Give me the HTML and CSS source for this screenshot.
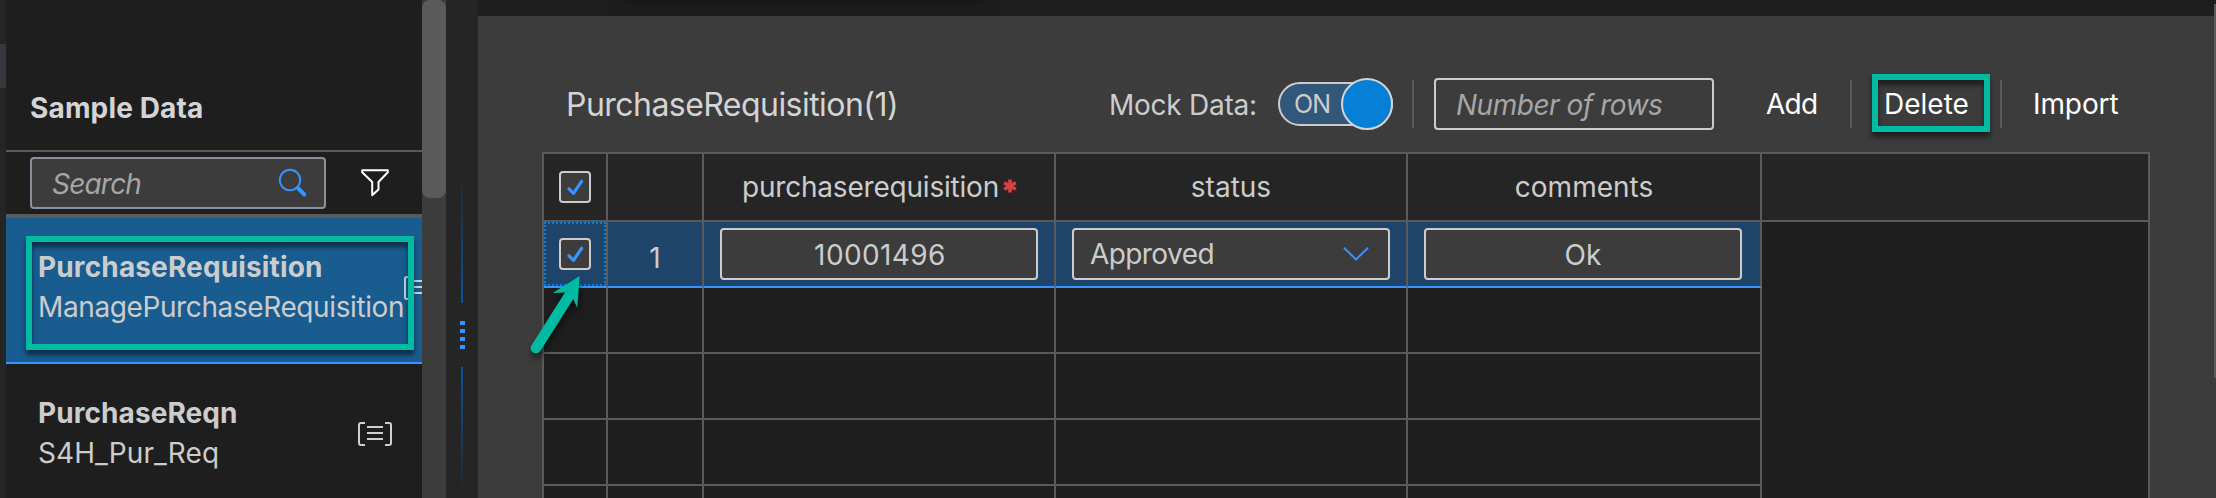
FILE: index.html
```html
<!DOCTYPE html>
<html lang="en">
<head>
<meta charset="utf-8">
<title>Sample Data</title>
<link rel="stylesheet" href="styles.css">
</head>
<body>
<div class="app">
  <div class="rail"><div class="rail-mark"></div></div>

  <aside class="sidebar">
    <h2 class="side-title">Sample Data</h2>
    <div class="search-bar">
      <div class="search">
        <span class="search-hint">Search</span>
        <svg class="icon-search" viewBox="0 0 30 30" fill="none" stroke="#3794ff" stroke-linecap="round"><circle cx="12" cy="12" r="10.2" stroke-width="1.9"/><path d="M20 20.200L26.300 26.500" stroke-width="4"/></svg>
      </div>
      <svg class="icon-filter" viewBox="0 0 30 30" fill="none" stroke="#fff" stroke-width="2" stroke-linejoin="round"><path d="M2.200 2.200H27.800V4.200L18.500 14V21.500L12.200 27.300V14L2.200 4.200Z"/></svg>
    </div>
    <div class="item item-active">
      <div class="item-text"><strong class="name name-a">PurchaseRequisition</strong><span class="sub sub-a">ManagePurchaseRequisition</span></div>
      <svg class="icon-list" viewBox="0 0 34 24" fill="none" stroke="#d0d0d0" stroke-width="2"><path d="M7 1H3Q1 1 1 3V21Q1 23 3 23H7M27 1H31Q33 1 33 3V21Q33 23 31 23H27M9 5H25M9 11H25M9 17H25"/></svg>
      <div class="mark mark-item"></div>
    </div>
    <div class="item">
      <div class="item-text"><strong class="name">PurchaseReqn</strong><span class="sub">S4H_Pur_Req</span></div>
      <svg class="icon-list" viewBox="0 0 34 24" fill="none" stroke="#d0d0d0" stroke-width="2"><path d="M7 1H3Q1 1 1 3V21Q1 23 3 23H7M27 1H31Q33 1 33 3V21Q33 23 31 23H27M9 5H25M9 11H25M9 17H25"/></svg>
    </div>
  </aside>

  <div class="scroll"><div class="thumb"></div></div>

  <div class="splitter">
    <div class="split-line up"></div>
    <div class="grip"><i></i><i></i><i></i><i></i></div>
    <div class="split-line down"></div>
  </div>

  <main class="main">
    <div class="top-strip"><div class="top-shadow"></div></div>
    <div class="toolbar">
      <h1 class="title">PurchaseRequisition(1)</h1>
      <span class="mock">Mock Data:</span>
      <div class="switch"><span class="on">ON</span><span class="knob"></span></div>
      <div class="sep"></div>
      <div class="rows-input">Number of rows</div>
      <div class="action add">Add</div>
      <div class="sep"></div>
      <div class="action delete">Delete</div>
      <div class="sep"></div>
      <div class="action import">Import</div>
    </div>
    <div class="grid">
      <div class="row head">
        <div class="cell c-check"><span class="box"><svg viewBox="0 0 32 32" fill="none" stroke="#3794ff" stroke-width="3.200" stroke-linecap="round" stroke-linejoin="round"><path d="M10 17.800L14.500 22.300L22.600 10.300"/></svg></span></div>
        <div class="cell c-num"></div>
        <div class="cell"><span class="h-req">purchaserequisition</span><svg class="star" viewBox="0 0 14 14" stroke="#d9413f" stroke-width="3.600"><path d="M7 .5V13.500M1.200 3.700L12.800 10.300M12.800 3.700L1.200 10.300"/></svg></div>
        <div class="cell">status</div>
        <div class="cell c-last">comments</div>
      </div>
      <div class="row selected">
        <div class="cell c-check focus"><span class="box"><svg viewBox="0 0 32 32" fill="none" stroke="#3794ff" stroke-width="3.200" stroke-linecap="round" stroke-linejoin="round"><path d="M10 17.800L14.500 22.300L22.600 10.300"/></svg></span></div>
        <div class="cell c-num num">1</div>
        <div class="cell"><div class="field digits">10001496</div></div>
        <div class="cell"><div class="field select"><span>Approved</span><svg class="chev" viewBox="0 0 26 14" fill="none" stroke="#3794ff" stroke-width="2" stroke-linecap="round" stroke-linejoin="round"><path d="M1.500 1.200L13 12.500L24.500 1.200"/></svg></div></div>
        <div class="cell c-last"><div class="field">Ok</div></div>
      </div>
      <div class="row"><div class="cell c-check"></div><div class="cell c-num"></div><div class="cell"></div><div class="cell"></div><div class="cell c-last"></div></div>
      <div class="row"><div class="cell c-check"></div><div class="cell c-num"></div><div class="cell"></div><div class="cell"></div><div class="cell c-last"></div></div>
      <div class="row"><div class="cell c-check"></div><div class="cell c-num"></div><div class="cell"></div><div class="cell"></div><div class="cell c-last"></div></div>
      <div class="row"><div class="cell c-check"></div><div class="cell c-num"></div><div class="cell"></div><div class="cell"></div><div class="cell c-last"></div></div>
    </div>
    <svg class="arrow" viewBox="0 0 70 100"><path d="M16 78L49 26" stroke="#00bba2" stroke-width="10.600" stroke-linecap="round"/><path d="M59.700 6L32.700 23L45 22.500L53 28.500L57.300 38Z" fill="#00bba2"/></svg>
    <div class="page-thumb"></div>
  </main>
</div>
</body>
</html>
```
FILE: styles.css
```css
* { box-sizing: border-box; }
body { margin: 0; background: #252526; color: #ccc; font: 28px/40px Inter, sans-serif; }
h1, h2 { margin: 0; }
svg { display: block; flex: none; }
.app { display: flex; width: 2216px; height: 498px; overflow: hidden; }

.rail { width: 6px; padding-top: 44px; background: #252526; }
.rail-mark { height: 44px; background: #37373d; }

.sidebar { width: 416px; background: #1e1e1e; overflow: hidden; }
.side-title { height: 152px; padding: 88px 0 0 24px; border-bottom: 2px solid #5a5a5a; font-size: 28px; line-height: 40px; letter-spacing: .15px; color: #d4d4d4; }
.search-bar { display: flex; align-items: center; height: 66px; padding: 0 0 0 24px; border-bottom: 4px solid #5a5a5a; }
.search { display: flex; align-items: center; justify-content: space-between; width: 296px; height: 52px; padding: 0 16px 0 20px; border: 2px solid #89919a; border-radius: 4px; background: #3c3c3c; }
.search-hint { padding-top: 1px; font-style: italic; letter-spacing: -.8px; color: #a6a6a6; }
.icon-search { width: 30px; height: 30px; }
.icon-filter { width: 30px; height: 30px; margin-left: 34px; }

.item { position: relative; display: flex; align-items: flex-start; justify-content: space-between; height: 146px; padding: 29px 30px 0 32px; }
.item-active { justify-content: flex-start; padding-right: 0; background: #195c90; border-bottom: 2px solid #3794ff; }
.item-text { display: flex; flex-direction: column; flex: none; }
.name { letter-spacing: .07px; }
.name-a { letter-spacing: .14px; }
.sub { letter-spacing: .07px; }
.sub-a { width: 366px; letter-spacing: -.39px; }
.icon-list { width: 34px; height: 24px; margin-top: 29px; }
.mark { position: absolute; border: 6px solid #00bba2; box-shadow: 0 5px 5px rgba(0, 0, 0, .5), inset 0 5px 5px rgba(0, 0, 0, .5); }
.mark-item { left: 20px; top: 18px; width: 388px; height: 114px; }

.scroll { width: 24px; background: #3c3c3c; }
.thumb { height: 198px; border-radius: 8px; background: #5a5a5a; }

.splitter { display: flex; flex-direction: column; align-items: center; width: 32px; padding-top: 173px; background: #252526; }
.split-line { width: 2px; height: 130px; }
.up { background: linear-gradient(rgba(8, 84, 160, 0), #0854a0); }
.down { background: linear-gradient(#0854a0, rgba(8, 84, 160, 0)); }
.grip { display: grid; gap: 4px; padding: 18px 0; margin-left: 1px; }
.grip i { width: 5px; height: 4px; background: #3794ff; }

.main { position: relative; width: 1738px; background: #3c3c3c; overflow: hidden; }
.top-strip { position: relative; height: 16px; background: #1e1e1e; overflow: hidden; }
.top-shadow { position: absolute; left: 150px; top: -15px; width: 352px; height: 10px; box-shadow: 0 2px 16px 4px rgba(0, 0, 0, .5); }
.toolbar { display: flex; align-items: flex-start; height: 136px; padding-left: 88px; }
.title { width: 543px; margin-top: 69px; font-size: 32px; font-weight: 400; letter-spacing: -.54px; color: #d4d4d4; }
.mock { width: 169px; margin-top: 69px; letter-spacing: -.25px; }
.switch { position: relative; width: 115px; height: 44px; margin: 66px 19px 0 0; padding-left: 14px; border: 2px solid #ccc; border-radius: 22px; background: #31587a; line-height: 40px; font-size: 25px; }
.on { letter-spacing: -.8px; }
.knob { position: absolute; right: -2px; top: -6px; width: 52px; height: 52px; border: 2px solid #d4d4d4; border-radius: 50%; background: #067fd7; }
.sep { width: 2px; height: 48px; margin-top: 64px; background: #5a5a5a; }
.rows-input { width: 280px; height: 52px; margin: 62px 0 0 20px; padding-left: 20px; border: 2px solid #ccc; border-radius: 4px; line-height: 50px; font-style: italic; letter-spacing: -.48px; color: #a6a6a6; }
.action { height: 58px; margin-top: 58px; line-height: 60px; color: #fff; }
.add { width: 84px; margin-left: 52px; letter-spacing: -.7px; }
.delete { width: 118px; margin: 58px 10px 0 20px; padding-left: 6px; border: 6px solid #00bba2; line-height: 48px; box-shadow: 0 5px 5px rgba(0, 0, 0, .5), inset 0 5px 5px rgba(0, 0, 0, .5); }
.import { margin-left: 31px; letter-spacing: -.1px; }

.grid { width: 1608px; height: 400px; margin-left: 64px; border: 2px solid #5a5a5a; background: #1e1e1e; }
.row { display: flex; height: 66px; }
.head { height: 68px; background: #252525; border-bottom: 2px solid #5a5a5a; }
.cell { display: flex; align-items: center; justify-content: center; width: 352px; border-right: 2px solid #5a5a5a; border-bottom: 2px solid #5a5a5a; }
.c-check { width: 64px; }
.c-num { width: 96px; }
.c-last { width: 354px; }
.head .cell { border-bottom: 0; }
.selected .cell { background: #1e4569; border-bottom-color: #3794ff; }
.selected .c-last { padding-right: 2px; }
.num { padding-top: 8px; }
.focus { position: relative; }
.focus::after { content: ""; position: absolute; inset: 0; border: 2px dotted #067fd7; }
.box { width: 32px; height: 32px; border: 2px solid #ccc; border-radius: 4px; background: #3c3c3c; }
.box svg { width: 32px; height: 32px; margin: -2px; }
.h-req { margin-left: 1px; letter-spacing: -.2px; }
.star { width: 14px; height: 14px; margin: 0 0 2px 4px; }
.field { width: 318px; height: 52px; border: 2px solid #ccc; border-radius: 4px; background: #3c3c3c; line-height: 50px; text-align: center; }
.digits { padding-left: 2px; letter-spacing: .4px; }
.select { display: flex; align-items: center; justify-content: space-between; padding: 0 19px 0 16px; letter-spacing: -.58px; }
.chev { width: 26px; height: 14px; }

.arrow { position: absolute; left: 42px; top: 270px; width: 70px; height: 100px; filter: drop-shadow(1px 5px 3px rgba(0, 0, 0, .5)); }
.page-thumb { position: absolute; right: 0; top: 4px; width: 2px; height: 374px; background: #5a5a5a; }
```
